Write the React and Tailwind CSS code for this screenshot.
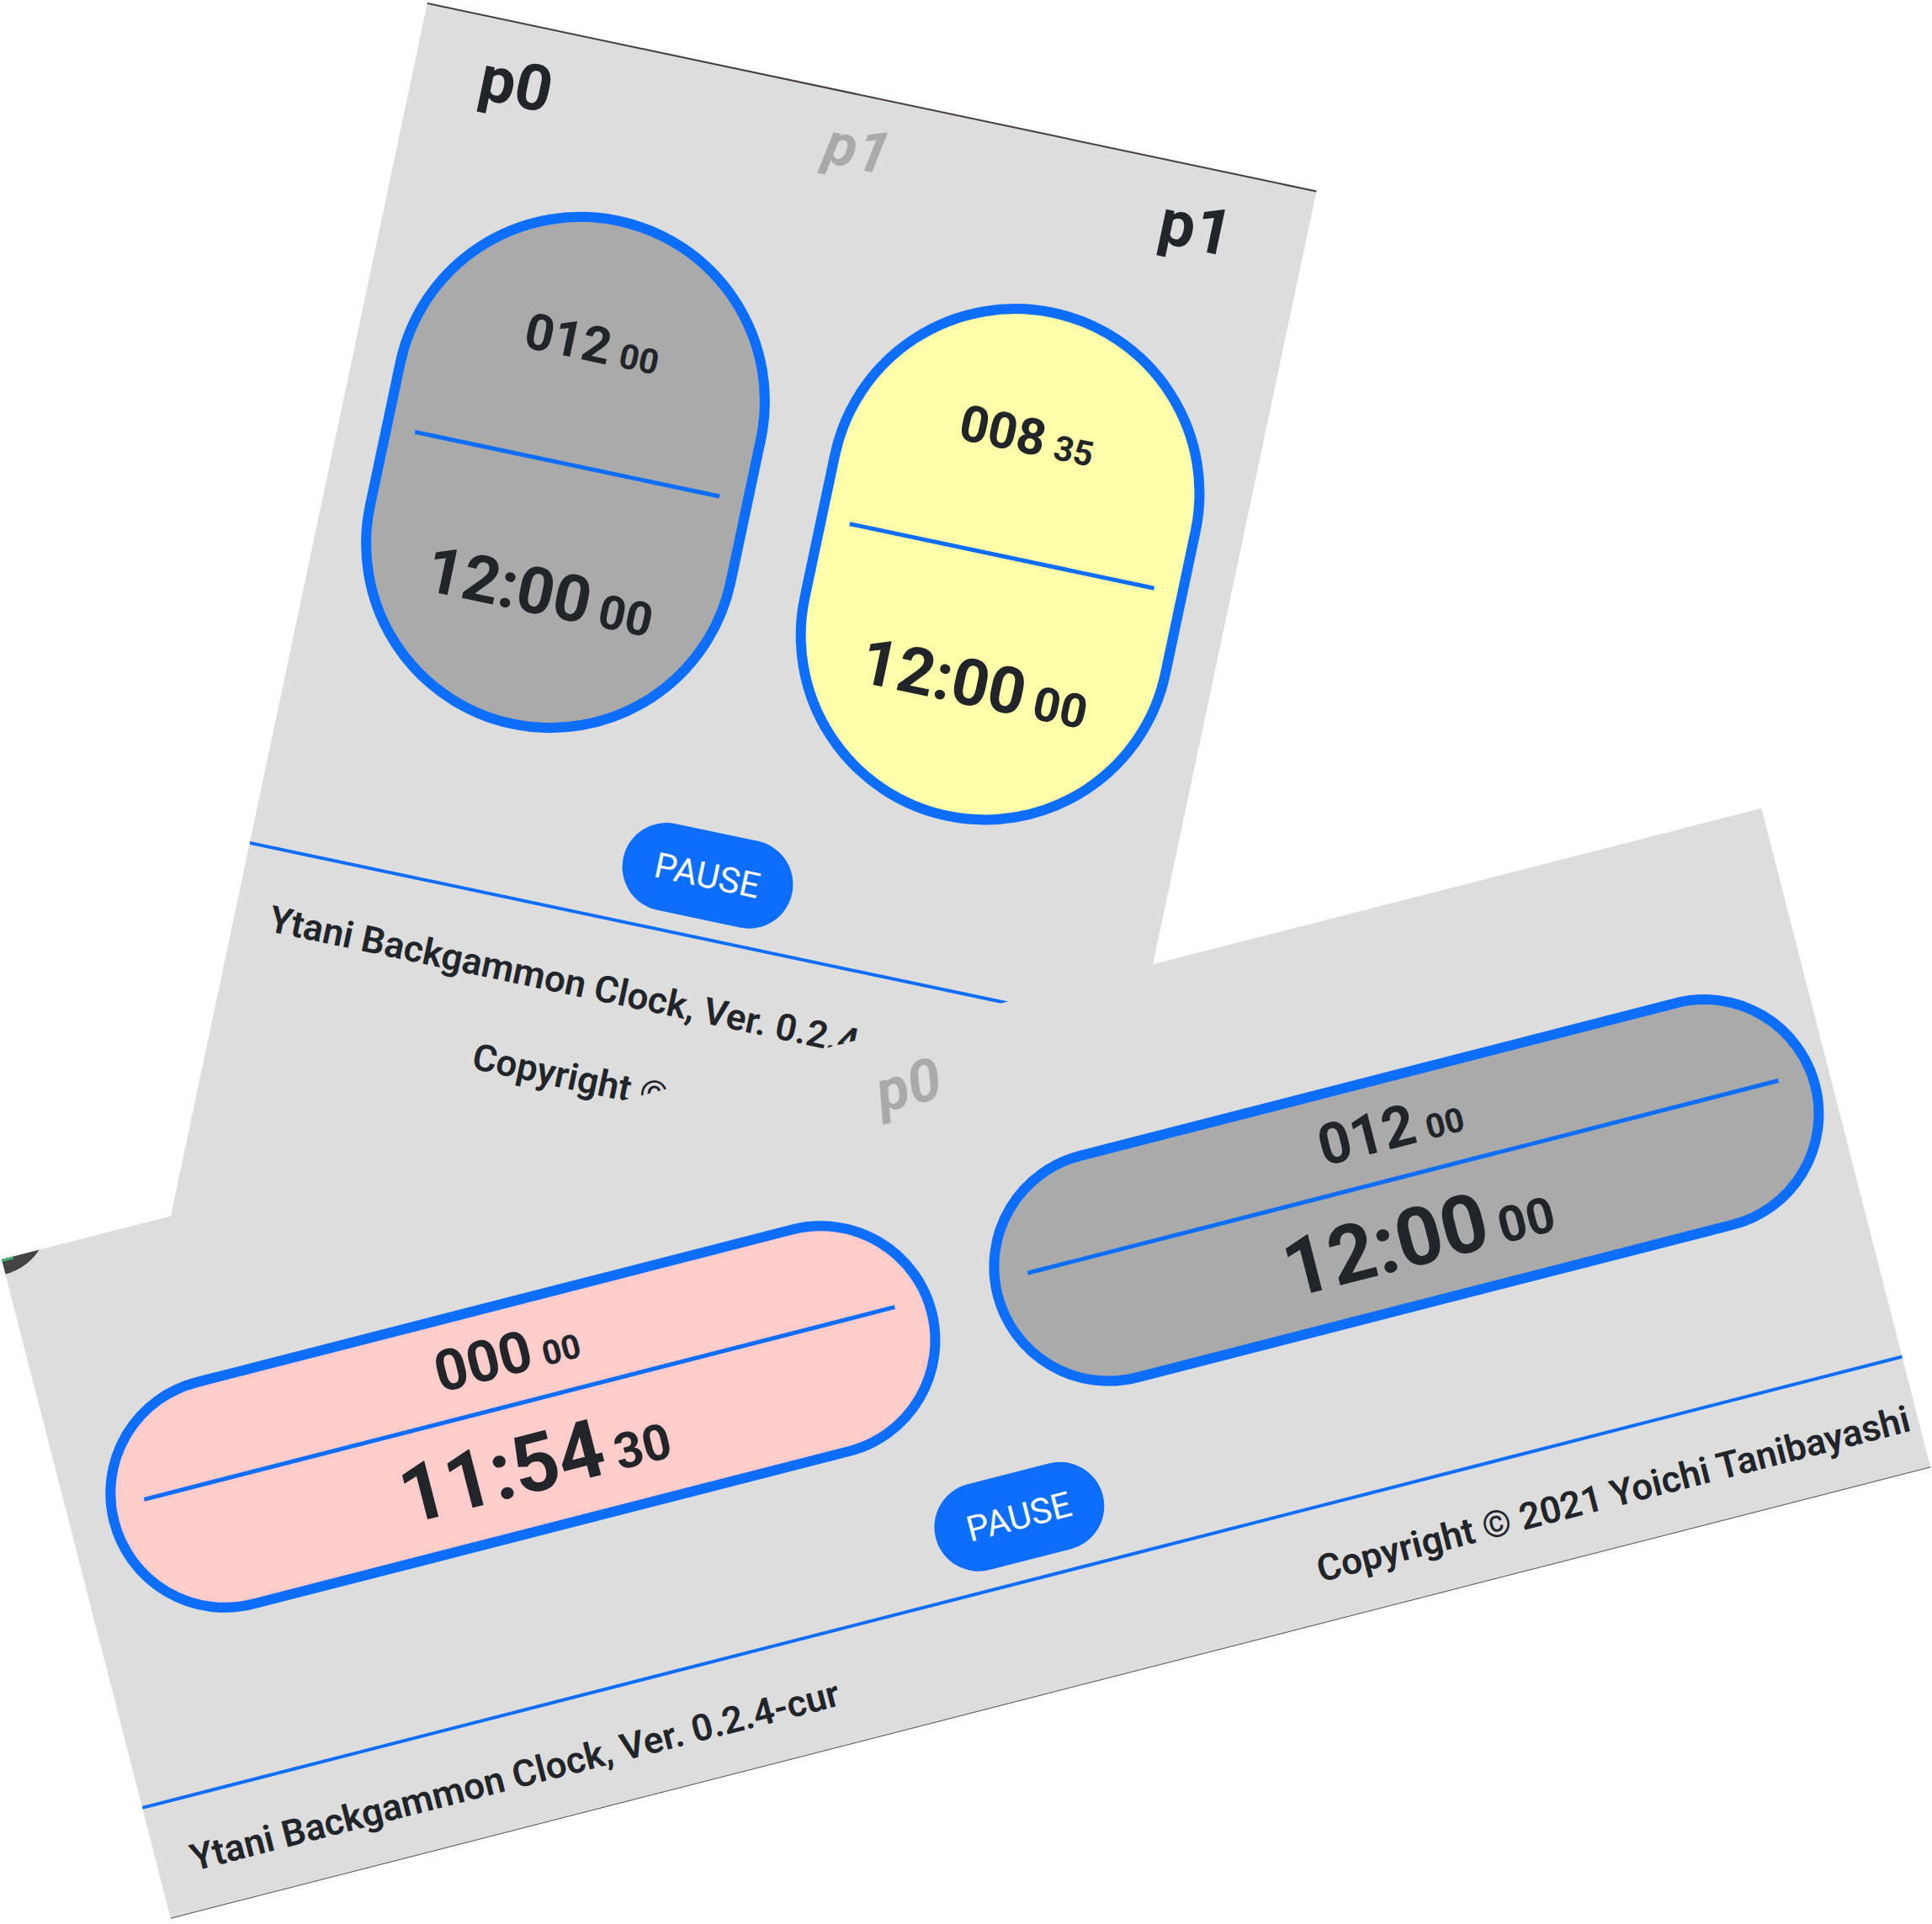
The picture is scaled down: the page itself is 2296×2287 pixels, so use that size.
import React from 'react'

const Clock = ({ shape, fill, divider, top, topSmall, bottom, bottomSmall, topCls, topSmallCls, bottomCls, bottomSmallCls }) => (
  <div className={`${shape} ${fill} rounded-full border-[12px] border-[#0d6efd] flex flex-col overflow-hidden`}>
    <div className="flex-auto flex items-center justify-center">
      <div className="flex items-baseline font-bold leading-[1.2] text-[#212529]">
        <span className={topCls}>{top}</span>
        <span className={topSmallCls}>{topSmall}</span>
      </div>
    </div>
    <div className={`h-[5px] shrink-0 bg-[#0d6efd] ${divider}`} />
    <div className="flex-auto flex items-center justify-center">
      <div className="flex items-baseline font-bold leading-[1.2] text-[#212529]">
        <span className={bottomCls}>{bottom}</span>
        <span className={bottomSmallCls}>{bottomSmall}</span>
      </div>
    </div>
  </div>
)

const PauseButton = () => (
  <button className="w-[205px] h-[105px] rounded-full bg-[#0d6efd] text-white text-[42px] leading-none flex items-center justify-center">
    PAUSE
  </button>
)

const PortraitScreen = () => (
  <div className="absolute left-[508px] top-[3px] w-[1080px] h-[1500px] origin-top-left rotate-[11.94deg] bg-[#dddddd] border-t-2 border-[#4b3d3d] overflow-hidden">
    <div className="flex justify-between items-start pl-[80px] pr-[88px] pt-[26px] font-bold leading-[1.2]">
      <span className="text-[76px] text-[#212529]">p0</span>
      <span className="text-[70px] text-[#aaaaaa] italic -mt-[6px]">p1</span>
      <span className="text-[76px] text-[#212529]">p1</span>
    </div>

    <div className="flex justify-center gap-[78px] mt-[82px]">
      <Clock
        shape="w-[450px] h-[623px]"
        fill="bg-[#aaaaaa]"
        divider="mx-[28px]"
        top="012" topSmall="00"
        bottom="12:00" bottomSmall="00"
        topCls="text-[60px]" topSmallCls="text-[41px] ml-[12px]"
        bottomCls="text-[77px]" bottomSmallCls="text-[56px] ml-[12px]"
      />
      <Clock
        shape="w-[450px] h-[623px]"
        fill="bg-[#ffffaa]"
        divider="mx-[28px]"
        top="008" topSmall="35"
        bottom="12:00" bottomSmall="00"
        topCls="text-[60px]" topSmallCls="text-[41px] ml-[12px]"
        bottomCls="text-[77px]" bottomSmallCls="text-[56px] ml-[12px]"
      />
    </div>

    <div className="flex justify-center mt-[70px]">
      <PauseButton />
    </div>

    <div className="h-[4px] bg-[#0d6efd] mt-[20px]" />

    <div className="px-[42px] text-[44px] leading-[1.5] font-semibold text-[#212529]">
      <div className="mt-[48px] text-left whitespace-nowrap">Ytani Backgammon Clock, Ver. 0.2.4-cur</div>
      <div className="mt-[44px] text-right whitespace-nowrap">Copyright © 2021 Yoichi Tanibayashi</div>
    </div>
  </div>
)

const LandscapeScreen = () => (
  <div className="absolute left-[2px] top-[1497px] w-[2159px] h-[809px] origin-top-left -rotate-[14.38deg] bg-[#dddddd] border-b border-[#555555] overflow-hidden">
    <div className="w-[2190px]">
      <div className="flex justify-center pt-[25px] font-bold leading-[1.2]">
        <span className="text-[70px] text-[#aaaaaa] italic">p0</span>
      </div>

      <div className="flex justify-center gap-[69px] mt-[84px]">
        <Clock
          shape="w-[1015px] h-[284px]"
          fill="bg-[#ffcccc]"
          divider="mx-[35px]"
          top="000" topSmall="00"
          bottom="11:54" bottomSmall="30"
          topCls="text-[68px]" topSmallCls="text-[40px] ml-[12px]"
          bottomCls="text-[96px]" bottomSmallCls="text-[59px] ml-[12px]"
        />
        <Clock
          shape="w-[1015px] h-[284px]"
          fill="bg-[#aaaaaa]"
          divider="mx-[35px]"
          top="012" topSmall="00"
          bottom="12:00" bottomSmall="00"
          topCls="text-[68px]" topSmallCls="text-[40px] ml-[12px]"
          bottomCls="text-[96px]" bottomSmallCls="text-[59px] ml-[12px]"
        />
      </div>

      <div className="flex justify-center mt-[67px]">
        <PauseButton />
      </div>

      <div className="h-[4px] bg-[#0d6efd] mt-[22px]" />

      <div className="flex justify-between px-[41px] mt-[38px] text-[44px] leading-[1.5] font-semibold text-[#212529] whitespace-nowrap">
        <span>Ytani Backgammon Clock, Ver. 0.2.4-cur</span>
        <span>Copyright © 2021 Yoichi Tanibayashi</span>
      </div>
    </div>

    <div className="absolute -left-[68px] -top-[118px] w-[136px] h-[136px] rounded-full bg-[#444444]" />
    <div className="absolute left-0 top-0 w-[14px] h-[3px] bg-[#3cb371]" />
  </div>
)

export default function App() {
  return (
    <div className="relative w-[2296px] h-[2287px] overflow-hidden bg-white font-['Roboto',sans-serif]">
      <PortraitScreen />
      <LandscapeScreen />
    </div>
  )
}
